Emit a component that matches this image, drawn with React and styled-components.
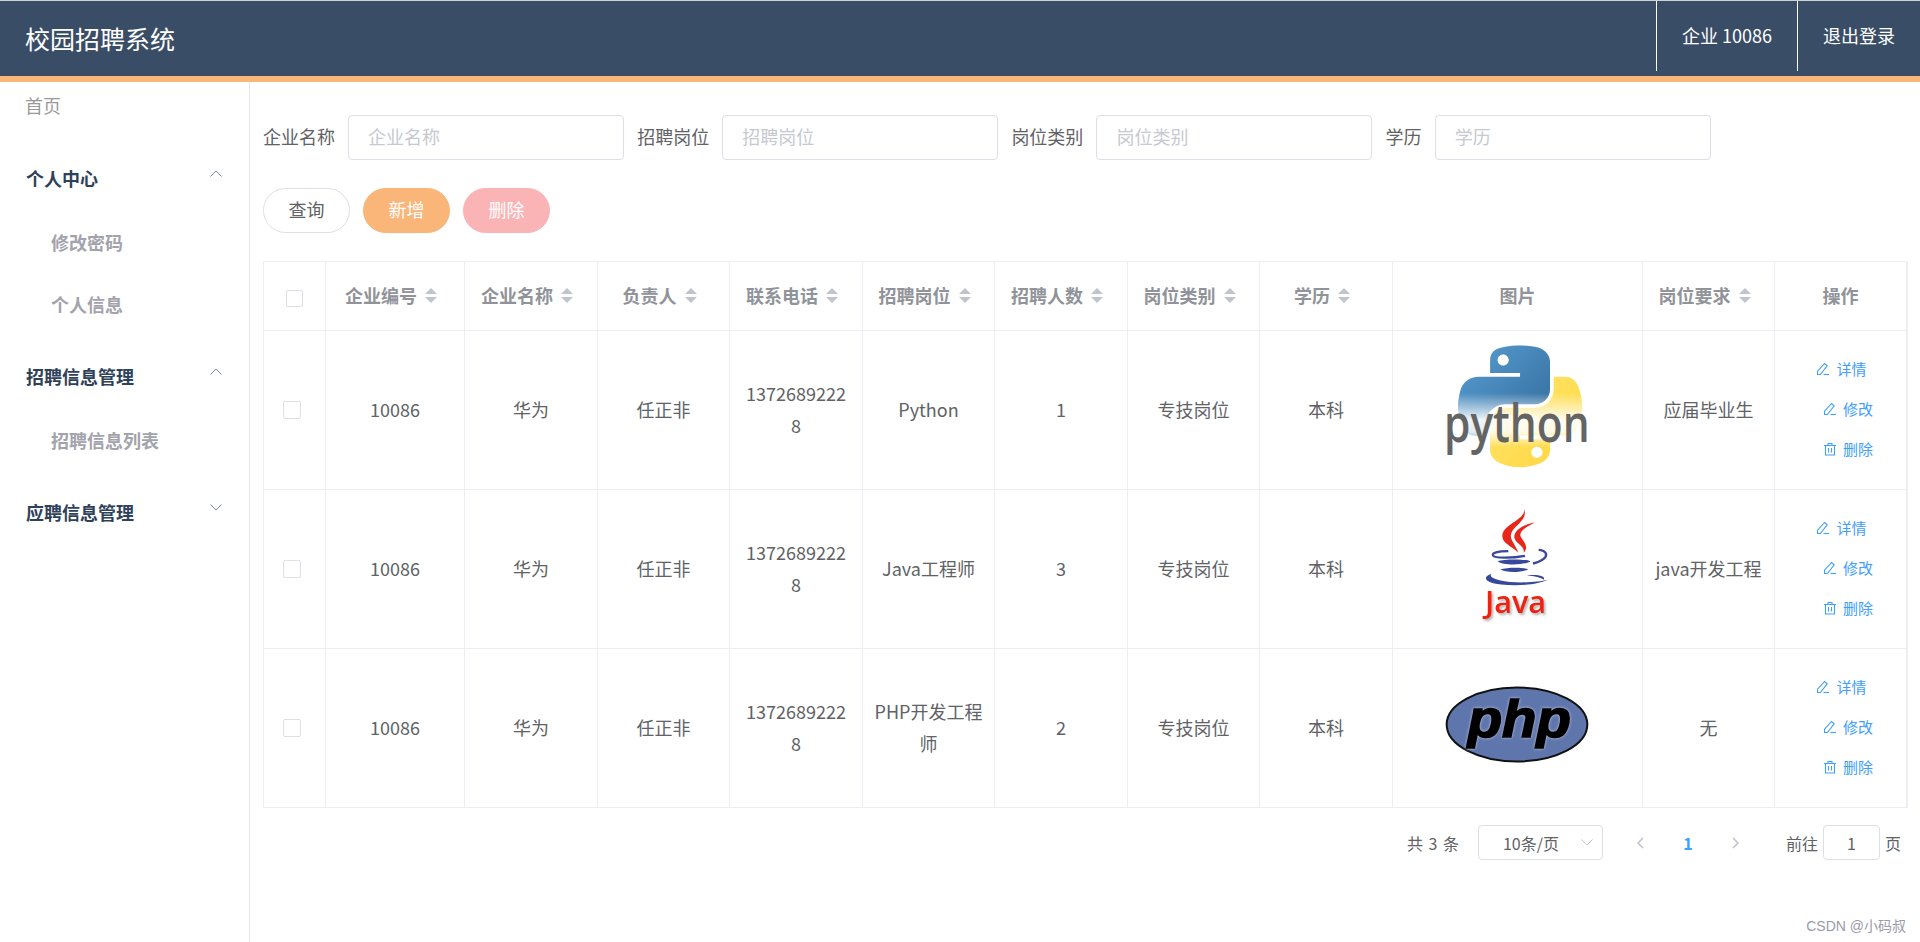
import React from "react";
import styled, { createGlobalStyle } from "styled-components";

const GlobalStyle = createGlobalStyle`
  html, body {
    margin: 0;
    padding: 0;
    background: #fff;
    font-family: "Noto Sans CJK SC", "Noto Sans", sans-serif;
    color: #606266;
  }
  * { box-sizing: border-box; }
`;

const Page = styled.div`
  height: 942px;
  display: flex;
  flex-direction: column;
  overflow: hidden;
  position: relative;
`;

const Header = styled.header`
  height: 82px;
  flex: none;
  display: flex;
  align-items: flex-start;
  background: #3a4d66;
  border-top: 1px solid #cfd3d8;
  border-bottom: 6px solid #fab578;
`;

const Title = styled.div`
  flex: 1;
  padding-left: 25px;
  font-size: 25px;
  line-height: 75px;
  color: #fff;
`;

const HeaderItem = styled.div`
  height: 70px;
  line-height: 68px;
  padding: 0 25px;
  font-size: 18px;
  color: #fff;
  border-left: 1px solid #fff;
`;

const Body = styled.div`
  flex: 1;
  display: flex;
  min-height: 0;
`;

const Sidebar = styled.aside`
  width: 250px;
  flex: none;
  border-right: 1px solid #e6e6e6;
`;

const HomeLink = styled.div`
  height: 46px;
  line-height: 46px;
  padding-left: 25px;
  font-size: 18px;
  color: #999;
  margin-bottom: 19px;
`;

const Group = styled.div`
  margin-bottom: 9px;
`;

const GroupTitle = styled.div`
  height: 62px;
  display: flex;
  align-items: center;
  justify-content: space-between;
  padding: 0 27px 1px 26px;
  font-size: 18px;
  font-weight: 700;
  color: #2f4159;
  margin-bottom: 3px;
`;

const Arrow = styled.svg`
  width: 12px;
  height: 7px;
  margin-bottom: 9px;
  fill: none;
  stroke: #7f8a99;
  stroke-width: 1;
`;

const SubItem = styled.div`
  height: 62px;
  line-height: 60px;
  padding-left: 51px;
  font-size: 18px;
  font-weight: 700;
  color: #a3a3ad;
`;

const Main = styled.main`
  flex: 1;
  min-width: 0;
  padding: 33px 12px 0 13px;
`;

const SearchRow = styled.div`
  display: flex;
  align-items: center;
  gap: 13.1px;
  margin-bottom: 28px;
`;

const FieldLabel = styled.label`
  font-size: 18px;
  color: #606266;
  white-space: nowrap;
  margin-top: -3px;
`;

const SearchInput = styled.input`
  width: 276px;
  height: 45px;
  padding: 0 19px 3px;
  border: 1px solid #dcdfe6;
  border-radius: 4px;
  font: inherit;
  font-size: 18px;
  color: #606266;
  outline: none;
  &::placeholder {
    color: #c6c9d0;
    opacity: 1;
  }
`;

const ButtonRow = styled.div`
  display: flex;
  gap: 13px;
  margin-bottom: 28px;
`;

const PillButton = styled.button`
  width: 87px;
  height: 45px;
  border-radius: 23px;
  border: 1px solid ${(p) => p.$bg || "#dcdfe6"};
  background: ${(p) => p.$bg || "#fff"};
  color: ${(p) => (p.$bg ? "#fff" : "#606266")};
  font: inherit;
  font-size: 18px;
  padding: 0 0 3px;
`;

const TableBox = styled.div`
  width: 1645px;
  border: 1px solid #ebeef5;
  border-bottom: none;
`;

const Table = styled.table`
  width: 1643px;
  table-layout: fixed;
  border-collapse: separate;
  border-spacing: 0;
`;

const HeadCell = styled.th`
  height: 69px;
  padding: 0;
  border-right: 1px solid #ebeef5;
  border-bottom: 1px solid #ebeef5;
  font-size: 18px;
  font-weight: 700;
  color: #909399;
  text-align: center;
`;

const HeadInner = styled.div`
  display: flex;
  align-items: center;
  justify-content: center;
  margin-top: -2px;
`;

const Caret = styled.span`
  display: inline-flex;
  flex-direction: column;
  gap: 3px;
  margin: 0 8px;
  &::before,
  &::after {
    content: "";
    display: block;
    width: 0;
    height: 0;
    border-left: 6px solid transparent;
    border-right: 6px solid transparent;
  }
  &::before {
    border-bottom: 6px solid #c0c4cc;
  }
  &::after {
    border-top: 6px solid #c0c4cc;
  }
`;

const Cell = styled.td`
  height: 159px;
  padding: 0 12px 2px;
  border-right: 1px solid #ebeef5;
  border-bottom: 1px solid #ebeef5;
  font-size: 18px;
  line-height: 32px;
  color: #606266;
  text-align: center;
  word-break: break-all;
`;

const JobCell = styled(Cell)`
  padding: 0 11px 2px;
`;

const PictureCell = styled(Cell)`
  padding: 0;
`;

const Check = styled.input.attrs({ type: "checkbox" })`
  appearance: none;
  display: block;
  width: ${(p) => p.$size}px;
  height: ${(p) => p.$size}px;
  margin: ${(p) => (p.$size === 17 ? "4px auto 0" : "0 auto 0 19px")};
  border: 1px solid #dcdfe6;
  border-radius: 2px;
  background: #fff;
`;

const Logo = styled.svg`
  display: block;
  width: 150px;
  height: 130px;
  margin: 0 auto;
  overflow: visible;
`;

const Actions = styled.div`
  display: flex;
  flex-direction: column;
  align-items: center;
  gap: 15px;
  margin: 0 -12px;
`;

const ActionLink = styled.a`
  display: flex;
  align-items: center;
  gap: 6px;
  height: 25px;
  font-size: 15px;
  color: #409eff;
  margin-left: ${(p) => (p.$first ? "2px" : "15px")};
`;

const ActionIcon = styled.svg`
  width: 14px;
  height: 14px;
  fill: none;
  stroke: #409eff;
  stroke-width: 1.1;
`;

const Pagination = styled.div`
  display: flex;
  align-items: center;
  justify-content: flex-end;
  height: 35px;
  margin-top: 17px;
  padding-right: 7px;
  font-size: 16px;
  color: #606266;
`;

const Total = styled.span`
  margin-right: 19px;
  word-spacing: 2px;
`;

const PageSize = styled.div`
  width: 125px;
  height: 35px;
  display: flex;
  align-items: center;
  justify-content: space-between;
  padding: 0 9px 0 24px;
  border: 1px solid #dcdfe6;
  border-radius: 4px;
  margin-right: 13px;
`;

const PagerButton = styled.div`
  width: 48px;
  text-align: center;
  display: flex;
  justify-content: center;
  align-items: center;
  font-weight: 700;
  color: #409eff;
`;

const PagerIcon = styled.svg`
  width: ${(p) => p.$w}px;
  height: ${(p) => p.$h}px;
  fill: none;
  stroke: #c0c4cc;
  stroke-width: ${(p) => p.$sw};
`;

const JumpLabel = styled.span`
  margin-left: ${(p) => p.$left || 0}px;
`;

const JumpInput = styled.input`
  width: 57px;
  height: 35px;
  margin: 0 5px;
  padding: 0;
  border: 1px solid #dcdfe6;
  border-radius: 4px;
  text-align: center;
  font: inherit;
  color: #606266;
  outline: none;
`;

const Watermark = styled.div`
  position: absolute;
  right: 14px;
  bottom: 6px;
  font-family: "Liberation Sans", "Noto Sans CJK SC", sans-serif;
  font-size: 14px;
  line-height: 20px;
  color: #999aaa;
`;

const columns = [
  { width: 62 },
  { width: 139, title: "企业编号", sort: true },
  { width: 133, title: "企业名称", sort: true },
  { width: 132, title: "负责人", sort: true },
  { width: 133, title: "联系电话", sort: true },
  { width: 132, title: "招聘岗位", sort: true },
  { width: 133, title: "招聘人数", sort: true },
  { width: 132, title: "岗位类别", sort: true },
  { width: 133, title: "学历", sort: true },
  { width: 250, title: "图片" },
  { width: 132, title: "岗位要求", sort: true },
  { width: 132, title: "操作" },
];

function PythonLogo() {
  return (
    <Logo viewBox="0 0 150 130">
      <defs>
        <linearGradient id="pyBlue" x1="0" y1="0" x2="1" y2="1">
          <stop offset="0" stopColor="#5a9fd4" />
          <stop offset="1" stopColor="#306998" />
        </linearGradient>
        <linearGradient id="pyYellow" x1="0" y1="0" x2="1" y2="1">
          <stop offset="0" stopColor="#ffe873" />
          <stop offset="1" stopColor="#ffd43b" />
        </linearGradient>
        <linearGradient id="pyFade" x1="0" y1="0" x2="0" y2="1">
          <stop offset="0" stopColor="#fff" stopOpacity="0" />
          <stop offset="0.5" stopColor="#fff" stopOpacity="0.92" />
          <stop offset="0.72" stopColor="#fff" stopOpacity="0.85" />
          <stop offset="1" stopColor="#fff" stopOpacity="0" />
        </linearGradient>
      </defs>
      <g transform="translate(15 0.5) scale(1.118 1.085)">
        <path
          fill="url(#pyBlue)"
          fillRule="evenodd"
          d="M54.9 0C50.3 0 46 .4 42.1 1.1 30.8 3.1 28.7 7.3 28.7 15v10.3h26.8v3.4H18.6C10.8 28.7 4 33.3 1.9 42.3c-2.5 10.2-2.6 16.5 0 27.2 1.9 7.9 6.4 13.6 14.2 13.6h9.3V70.8c0-8.8 7.6-16.6 16.7-16.6h26.8c7.4 0 13.4-6.1 13.4-13.6V15c0-7.3-6.1-12.7-13.4-13.9C64.3.3 59.5 0 54.9 0zM40.4 8.2c2.8 0 5 2.3 5 5.1s-2.2 5.1-5 5.1-5-2.3-5-5.1 2.2-5.1 5-5.1z"
        />
        <path
          fill="url(#pyYellow)"
          fillRule="evenodd"
          d="M85.6 28.7v11.9c0 9.2-7.8 17-16.7 17H42.1c-7.3 0-13.4 6.2-13.4 13.5v25.5c0 7.3 6.3 11.5 13.4 13.6 8.5 2.5 16.7 3 26.8 0 6.7-1.9 13.4-5.8 13.4-13.6V86.4H55.5V83h40.2c7.8 0 10.7-5.4 13.4-13.5 2.8-8.4 2.7-16.4 0-27.2-1.9-7.8-5.6-13.6-13.4-13.6zM70.6 93.3c2.8 0 5 2.3 5 5.1s-2.2 5.1-5 5.1-5-2.3-5-5.1 2.2-5.1 5-5.1z"
        />
      </g>
      <rect x="10" y="48" width="130" height="54" fill="url(#pyFade)" />
      <text
        transform="translate(1 97) scale(0.8 1)"
        fontFamily="Open Sans, sans-serif"
        fontWeight="600"
        fontSize="53"
        fill="#646464"
      >
        python
      </text>
    </Logo>
  );
}

function JavaLogo() {
  return (
    <Logo viewBox="0 0 150 130">
      <g transform="translate(28 -3.5) scale(0.3333)">
        <path
          fill="#e8261a"
          d="M150 8C190 55 94 65 94 107c0 22 30 30 48 50-8-26-30-42-20-62 12-26 62-42 28-87z"
        />
        <path
          fill="#e8261a"
          d="M192 66c-42 7-70 29-60 51 7 15 30 20 26 40 20-22-8-40-10-52-2-15 20-27 44-39z"
        />
        <g fill="none" stroke="#37479b">
          <path strokeWidth="7" d="M112 152c-32 0-50 5-46 13 5 8 52 9 96 1" />
          <path strokeWidth="7" d="M203 148c24 2 28 17 15 27-9 7-20 11-32 14" />
        </g>
        <path fill="#37479b" d="M80 182c20-7 82-7 98 0-12 12-84 14-98 0z" />
        <path fill="#37479b" d="M88 207c20-7 68-7 84-1-20 11-68 11-84 1z" />
        <path
          fill="#37479b"
          d="M62 220c-30 9-21 27 28 32 52 6 114 0 140-14-33 8-100 12-145 1-25-7-30-13-23-19z"
        />
        <path fill="#37479b" d="M168 224c32-3 58 2 50 14-6-7-28-11-50-14z" />
        <text
          transform="translate(42 337)"
          fontFamily="Open Sans, sans-serif"
          fontWeight="600"
          fontSize="92"
          fill="#f0210f"
          style={{ filter: "drop-shadow(5px 6px 3px rgba(0,0,0,0.3))" }}
        >
          Java
        </text>
      </g>
    </Logo>
  );
}

function PhpLogo() {
  return (
    <Logo viewBox="0 0 150 130">
      <g transform="translate(-2 17.5) scale(0.3333)">
        <ellipse cx="228" cy="132" rx="211" ry="111" fill="#5f76ad" stroke="#111" strokeWidth="6" />
        <text
          transform="translate(80 170) scale(1.07 1)"
          fontFamily="Liberation Sans, sans-serif"
          fontWeight="700"
          fontStyle="italic"
          fontSize="158"
          fill="#000"
          stroke="#000"
          strokeWidth="5"
          style={{ filter: "drop-shadow(0 0 4px #c3cbe0)" }}
        >
          php
        </text>
      </g>
    </Logo>
  );
}

const rows = [
  { job: "Python", count: 1, need: "应届毕业生", logo: <PythonLogo /> },
  { job: "Java工程师", count: 3, need: "java开发工程", logo: <JavaLogo /> },
  { job: "PHP开发工程师", count: 2, need: "无", logo: <PhpLogo /> },
];

function EditIcon() {
  return (
    <ActionIcon viewBox="0 0 14 14">
      <path d="M1.5 12.5V9.2L8.6 1.5l2.6 2.3-6.8 8.7z" />
      <path d="M7.5 12.5H13" />
    </ActionIcon>
  );
}

function TrashIcon() {
  return (
    <ActionIcon viewBox="0 0 14 14">
      <path d="M1 3.5h12M5 3.5v-2h4v2M2.5 3.5v9.5h9v-9.5M5.5 6v4.5M8.5 6v4.5" />
    </ActionIcon>
  );
}

function MenuArrow({ up }) {
  return (
    <Arrow viewBox="0 0 12 7">
      <path d={up ? "M.5 6.5L6 1l5.5 5.5" : "M.5 .5L6 6l5.5-5.5"} />
    </Arrow>
  );
}

const fields = ["企业名称", "招聘岗位", "岗位类别", "学历"];

export default function App() {
  return (
    <Page>
      <GlobalStyle />
      <Header>
        <Title>校园招聘系统</Title>
        <HeaderItem>企业 10086</HeaderItem>
        <HeaderItem>退出登录</HeaderItem>
      </Header>
      <Body>
        <Sidebar>
          <HomeLink>首页</HomeLink>
          <Group>
            <GroupTitle>
              个人中心
              <MenuArrow up />
            </GroupTitle>
            <SubItem>修改密码</SubItem>
            <SubItem>个人信息</SubItem>
          </Group>
          <Group>
            <GroupTitle>
              招聘信息管理
              <MenuArrow up />
            </GroupTitle>
            <SubItem>招聘信息列表</SubItem>
          </Group>
          <Group>
            <GroupTitle>
              应聘信息管理
              <MenuArrow />
            </GroupTitle>
          </Group>
        </Sidebar>
        <Main>
          <SearchRow>
            {fields.map((f) => (
              <React.Fragment key={f}>
                <FieldLabel>{f}</FieldLabel>
                <SearchInput placeholder={f} />
              </React.Fragment>
            ))}
          </SearchRow>
          <ButtonRow>
            <PillButton>查询</PillButton>
            <PillButton $bg="#fab578">新增</PillButton>
            <PillButton $bg="#fbb4b6">删除</PillButton>
          </ButtonRow>
          <TableBox>
            <Table>
              <colgroup>
                {columns.map((c, i) => (
                  <col key={i} width={c.width} />
                ))}
              </colgroup>
              <thead>
                <tr>
                  {columns.map((c, i) => (
                    <HeadCell key={i}>
                      {i === 0 ? (
                        <Check $size={17} />
                      ) : (
                        <HeadInner>
                          {c.title}
                          {c.sort && <Caret />}
                        </HeadInner>
                      )}
                    </HeadCell>
                  ))}
                </tr>
              </thead>
              <tbody>
                {rows.map((r) => (
                  <tr key={r.job}>
                    <PictureCell>
                      <Check $size={18} />
                    </PictureCell>
                    <Cell>10086</Cell>
                    <Cell>华为</Cell>
                    <Cell>任正非</Cell>
                    <Cell>13726892228</Cell>
                    <JobCell>{r.job}</JobCell>
                    <Cell>{r.count}</Cell>
                    <Cell>专技岗位</Cell>
                    <Cell>本科</Cell>
                    <PictureCell>{r.logo}</PictureCell>
                    <Cell>{r.need}</Cell>
                    <Cell>
                      <Actions>
                        <ActionLink $first>
                          <EditIcon />
                          详情
                        </ActionLink>
                        <ActionLink>
                          <EditIcon />
                          修改
                        </ActionLink>
                        <ActionLink>
                          <TrashIcon />
                          删除
                        </ActionLink>
                      </Actions>
                    </Cell>
                  </tr>
                ))}
              </tbody>
            </Table>
          </TableBox>
          <Pagination>
            <Total>共 3 条</Total>
            <PageSize>
              10条/页
              <PagerIcon viewBox="0 0 12 7" $w={12} $h={7} $sw={1}>
                <path d="M.5 .5L6 6l5.5-5.5" />
              </PagerIcon>
            </PageSize>
            <PagerButton>
              <PagerIcon viewBox="0 0 8 12" $w={8} $h={12} $sw={1.6}>
                <path d="M7 1L2 6l5 5" />
              </PagerIcon>
            </PagerButton>
            <PagerButton>1</PagerButton>
            <PagerButton>
              <PagerIcon viewBox="0 0 8 12" $w={8} $h={12} $sw={1.6}>
                <path d="M1 1l5 5-5 5" />
              </PagerIcon>
            </PagerButton>
            <JumpLabel $left={26}>前往</JumpLabel>
            <JumpInput defaultValue="1" />
            <JumpLabel>页</JumpLabel>
          </Pagination>
        </Main>
      </Body>
      <Watermark>CSDN @小码叔</Watermark>
    </Page>
  );
}
